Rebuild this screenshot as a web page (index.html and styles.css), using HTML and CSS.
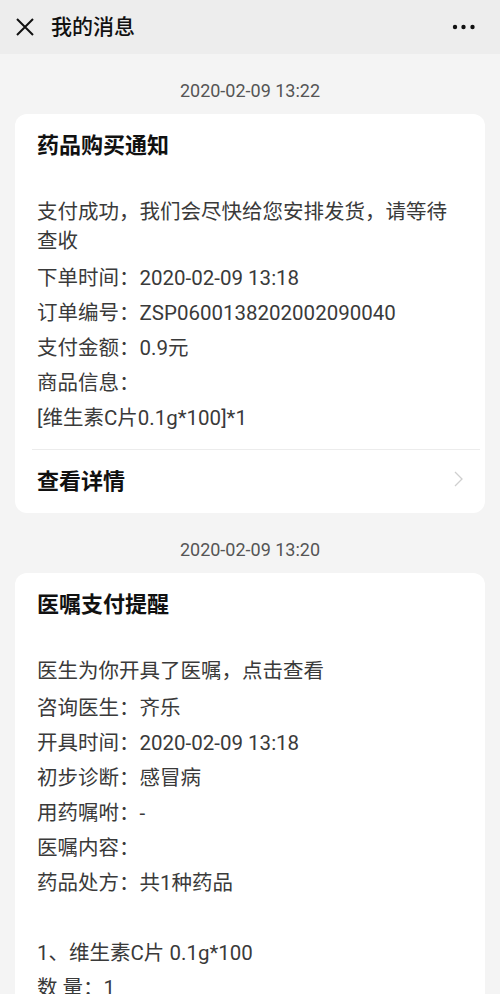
FILE: index.html
```html
<!DOCTYPE html>
<html lang="zh-CN">
<head>
<meta charset="utf-8">
<title>我的消息</title>
<link rel="stylesheet" href="styles.css">
</head>
<body>
<header class="topbar">
  <svg class="close" width="20" height="20" viewBox="0 0 20 20"><path d="M2 2 L18 18 M18 2 L2 18" stroke="#111" stroke-width="2" fill="none"/></svg>
  <h1 class="title">我的消息</h1>
  <svg class="more" width="24" height="6" viewBox="0 0 24 6"><circle cx="3" cy="3" r="2.2" fill="#111"/><circle cx="11.5" cy="3" r="2.2" fill="#111"/><circle cx="20.5" cy="3" r="2.2" fill="#111"/></svg>
</header>
<main class="feed">
  <div class="stamp">2020-02-09 13:22</div>
  <section class="card">
    <h2 class="card-title">药品购买通知</h2>
    <p class="desc">支付成功，我们会尽快给您安排发货，请等待查收</p>
    <div class="rows">
      <div class="row">下单时间：2020-02-09 13:18</div>
      <div class="row">订单编号：ZSP0600138202002090040</div>
      <div class="row">支付金额：0.9元</div>
      <div class="row">商品信息：</div>
      <div class="row">[维生素C片0.1g*100]*1</div>
    </div>
    <div class="divider"></div>
    <div class="footer">
      <span class="more-text">查看详情</span>
      <svg class="chev" width="9" height="16" viewBox="0 0 9 16"><path d="M1 1 L8 8 L1 15" stroke="#cfcfcf" stroke-width="1.3" fill="none"/></svg>
    </div>
  </section>
  <div class="stamp">2020-02-09 13:20</div>
  <section class="card">
    <h2 class="card-title">医嘱支付提醒</h2>
    <p class="desc">医生为你开具了医嘱，点击查看</p>
    <div class="rows">
      <div class="row">咨询医生：齐乐</div>
      <div class="row">开具时间：2020-02-09 13:18</div>
      <div class="row">初步诊断：感冒病</div>
      <div class="row">用药嘱咐：-</div>
      <div class="row">医嘱内容：</div>
      <div class="row">药品处方：共1种药品</div>
      <div class="row blank"></div>
      <div class="row">1、维生素C片 0.1g*100</div>
      <div class="row">数 量：1</div>
    </div>
  </section>
</main>
</body>
</html>
```
FILE: styles.css
```css
* { box-sizing: border-box; }
html, body { margin: 0; padding: 0; }
body {
  background: #f4f4f4;
  font-family: Roboto, "Noto Sans CJK SC", sans-serif;
  color: #3a3a3a;
  width: 500px;
  overflow: hidden;
}
.topbar {
  height: 54px;
  background: #ededed;
  display: flex;
  align-items: center;
  padding: 0 24px 0 15px;
}
.close { width: 20px; height: 20px; flex: none; }
.title {
  margin: 0 0 0 16px;
  font-size: 21px;
  font-weight: 500;
  color: #111;
  flex: 1;
  line-height: 30px;
}
.more { flex: none; }
.feed {
  padding: 0 15px;
}
.stamp {
  text-align: center;
  font-size: 18px;
  line-height: 24px;
  color: #555;
  padding: 25px 0 11px;
}
.card {
  background: #fff;
  border-radius: 12px;
  padding: 17px 22px 0;
}
.card-title {
  margin: 0 0 37px;
  font-size: 22px;
  line-height: 30px;
  font-weight: 700;
  color: #111;
}
.desc {
  margin: 0 0 5px;
  font-size: 20.5px;
  line-height: 29px;
}
.row {
  font-size: 20.5px;
  line-height: 35px;
  white-space: pre;
}
.blank { height: 35px; }
.divider {
  height: 1px;
  background: #ececec;
  margin: 13px -17px 0 -5px;
}
.footer {
  height: 63px;
  padding-bottom: 6px;
  display: flex;
  align-items: center;
  justify-content: space-between;
}
.more-text {
  font-size: 22px;
  font-weight: 700;
  color: #111;
}
.chev { flex: none; }
```
